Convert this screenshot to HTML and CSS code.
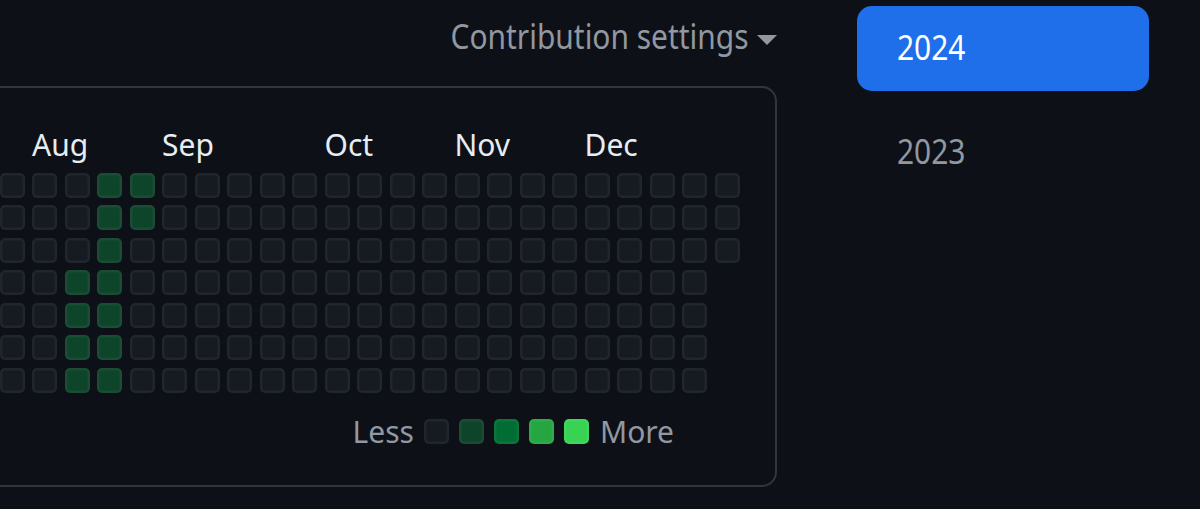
FILE: index.html
```html
<!DOCTYPE html>
<html lang="en">
<head>
<meta charset="utf-8">
<title>Contributions</title>
<link rel="stylesheet" href="styles.css">
</head>
<body>
<div class="page">
  <main class="main">
    <div class="header">
      <span class="settings">Contribution settings</span>
      <svg class="caret" width="20" height="10" viewBox="0 0 20 10" aria-hidden="true"><path d="M0 0 H20 L10 10 Z" fill="currentColor"/></svg>
    </div>
    <section class="card">
      <div class="months">
        <span class="month m-aug">Aug</span>
        <span class="month m-sep">Sep</span>
        <span class="month m-oct">Oct</span>
        <span class="month m-nov">Nov</span>
        <span class="month m-dec">Dec</span>
      </div>
      <div class="graph">
        <div class="week"><i class="c"></i><i class="c"></i><i class="c"></i><i class="c"></i><i class="c"></i><i class="c"></i><i class="c"></i></div>
        <div class="week"><i class="c"></i><i class="c"></i><i class="c"></i><i class="c"></i><i class="c"></i><i class="c"></i><i class="c"></i></div>
        <div class="week"><i class="c"></i><i class="c"></i><i class="c"></i><i class="c l1"></i><i class="c l1"></i><i class="c l1"></i><i class="c l1"></i></div>
        <div class="week"><i class="c l1"></i><i class="c l1"></i><i class="c l1"></i><i class="c l1"></i><i class="c l1"></i><i class="c l1"></i><i class="c l1"></i></div>
        <div class="week"><i class="c l1"></i><i class="c l1"></i><i class="c"></i><i class="c"></i><i class="c"></i><i class="c"></i><i class="c"></i></div>
        <div class="week"><i class="c"></i><i class="c"></i><i class="c"></i><i class="c"></i><i class="c"></i><i class="c"></i><i class="c"></i></div>
        <div class="week"><i class="c"></i><i class="c"></i><i class="c"></i><i class="c"></i><i class="c"></i><i class="c"></i><i class="c"></i></div>
        <div class="week"><i class="c"></i><i class="c"></i><i class="c"></i><i class="c"></i><i class="c"></i><i class="c"></i><i class="c"></i></div>
        <div class="week"><i class="c"></i><i class="c"></i><i class="c"></i><i class="c"></i><i class="c"></i><i class="c"></i><i class="c"></i></div>
        <div class="week"><i class="c"></i><i class="c"></i><i class="c"></i><i class="c"></i><i class="c"></i><i class="c"></i><i class="c"></i></div>
        <div class="week"><i class="c"></i><i class="c"></i><i class="c"></i><i class="c"></i><i class="c"></i><i class="c"></i><i class="c"></i></div>
        <div class="week"><i class="c"></i><i class="c"></i><i class="c"></i><i class="c"></i><i class="c"></i><i class="c"></i><i class="c"></i></div>
        <div class="week"><i class="c"></i><i class="c"></i><i class="c"></i><i class="c"></i><i class="c"></i><i class="c"></i><i class="c"></i></div>
        <div class="week"><i class="c"></i><i class="c"></i><i class="c"></i><i class="c"></i><i class="c"></i><i class="c"></i><i class="c"></i></div>
        <div class="week"><i class="c"></i><i class="c"></i><i class="c"></i><i class="c"></i><i class="c"></i><i class="c"></i><i class="c"></i></div>
        <div class="week"><i class="c"></i><i class="c"></i><i class="c"></i><i class="c"></i><i class="c"></i><i class="c"></i><i class="c"></i></div>
        <div class="week"><i class="c"></i><i class="c"></i><i class="c"></i><i class="c"></i><i class="c"></i><i class="c"></i><i class="c"></i></div>
        <div class="week"><i class="c"></i><i class="c"></i><i class="c"></i><i class="c"></i><i class="c"></i><i class="c"></i><i class="c"></i></div>
        <div class="week"><i class="c"></i><i class="c"></i><i class="c"></i><i class="c"></i><i class="c"></i><i class="c"></i><i class="c"></i></div>
        <div class="week"><i class="c"></i><i class="c"></i><i class="c"></i><i class="c"></i><i class="c"></i><i class="c"></i><i class="c"></i></div>
        <div class="week"><i class="c"></i><i class="c"></i><i class="c"></i><i class="c"></i><i class="c"></i><i class="c"></i><i class="c"></i></div>
        <div class="week"><i class="c"></i><i class="c"></i><i class="c"></i><i class="c"></i><i class="c"></i><i class="c"></i><i class="c"></i></div>
        <div class="week"><i class="c"></i><i class="c"></i><i class="c"></i></div>
      </div>
      <div class="legend">
        <span class="legend-text less">Less</span>
        <i class="c"></i>
        <i class="c l1"></i>
        <i class="c l2"></i>
        <i class="c l3"></i>
        <i class="c l4"></i>
        <span class="legend-text more">More</span>
      </div>
    </section>
  </main>
  <nav class="years">
    <a class="year active" href="#"><span class="year-label">2024</span></a>
    <a class="year" href="#"><span class="year-label">2023</span></a>
  </nav>
</div>
</body>
</html>
```

FILE: styles.css
```css
html, body {
  margin: 0;
  padding: 0;
  background: #0d1117;
}

body {
  font-family: "Noto Sans", "Open Sans", sans-serif;
  color: #e6edf3;
  overflow: hidden;
}

.page {
  display: flex;
  column-gap: 80px;
  width: 1200px;
  height: 509px;
}

.main {
  width: 777px;
  flex: none;
}

.header {
  display: flex;
  justify-content: flex-end;
  align-items: center;
  padding-top: 10px;
  height: 52px;
  margin-bottom: 24px;
  color: #9198a1;
}

.settings {
  display: inline-block;
  font-size: 35px;
  line-height: 52px;
  white-space: nowrap;
  transform: scaleX(0.855);
  transform-origin: right center;
}

.caret {
  display: block;
  margin-left: 9px;
  margin-top: 8px;
}

.card {
  margin-left: -40px;
  padding: 41.5px 0 38.5px 37.5px;
  border: 2.5px solid #30363d;
  border-radius: 15px;
  box-sizing: border-box;
  width: 817px;
}

.months {
  display: grid;
  grid-template-columns: repeat(23, 25px);
  column-gap: 7.5px;
  height: 30px;
  margin-bottom: 13px;
}

.month {
  font-size: 30px;
  line-height: 30px;
  white-space: nowrap;
  color: #e6edf3;
}

.m-aug { grid-column: 2; }
.m-sep { grid-column: 6; }
.m-oct { grid-column: 11; }
.m-nov { grid-column: 15; }
.m-dec { grid-column: 19; }

.graph {
  display: flex;
  column-gap: 7.5px;
  height: 220px;
}

.week {
  display: flex;
  flex-direction: column;
  row-gap: 7.5px;
}

.c {
  display: block;
  width: 25px;
  height: 25px;
  border-radius: 5px;
  background: #161b22;
  box-shadow: inset 0 0 0 2.5px rgba(255, 255, 255, 0.05);
  flex: none;
}

.c.l1 { background: #0e4429; }
.c.l2 { background: #006d32; }
.c.l3 { background: #26a641; }
.c.l4 { background: #39d353; }

.legend {
  display: flex;
  justify-content: flex-end;
  align-items: center;
  column-gap: 10px;
  margin-top: 24px;
  height: 30px;
  padding-right: 101px;
}

.legend-text {
  font-size: 30px;
  line-height: 30px;
  color: #9198a1;
}

.less { margin-right: 0; }
.more { margin-left: 1px; }

.years {
  width: 292px;
  flex: none;
  display: flex;
  flex-direction: column;
  row-gap: 19px;
  padding-top: 6px;
}

.year {
  display: block;
  padding: 18px 40px 22px;
  font-size: 35px;
  line-height: 45px;
  color: #9198a1;
  text-decoration: none;
  border-radius: 15px;
}

.year-label {
  display: inline-block;
  transform: scaleX(0.855);
  transform-origin: left center;
}

.year.active {
  background: #1f6feb;
  color: #ffffff;
}
```
